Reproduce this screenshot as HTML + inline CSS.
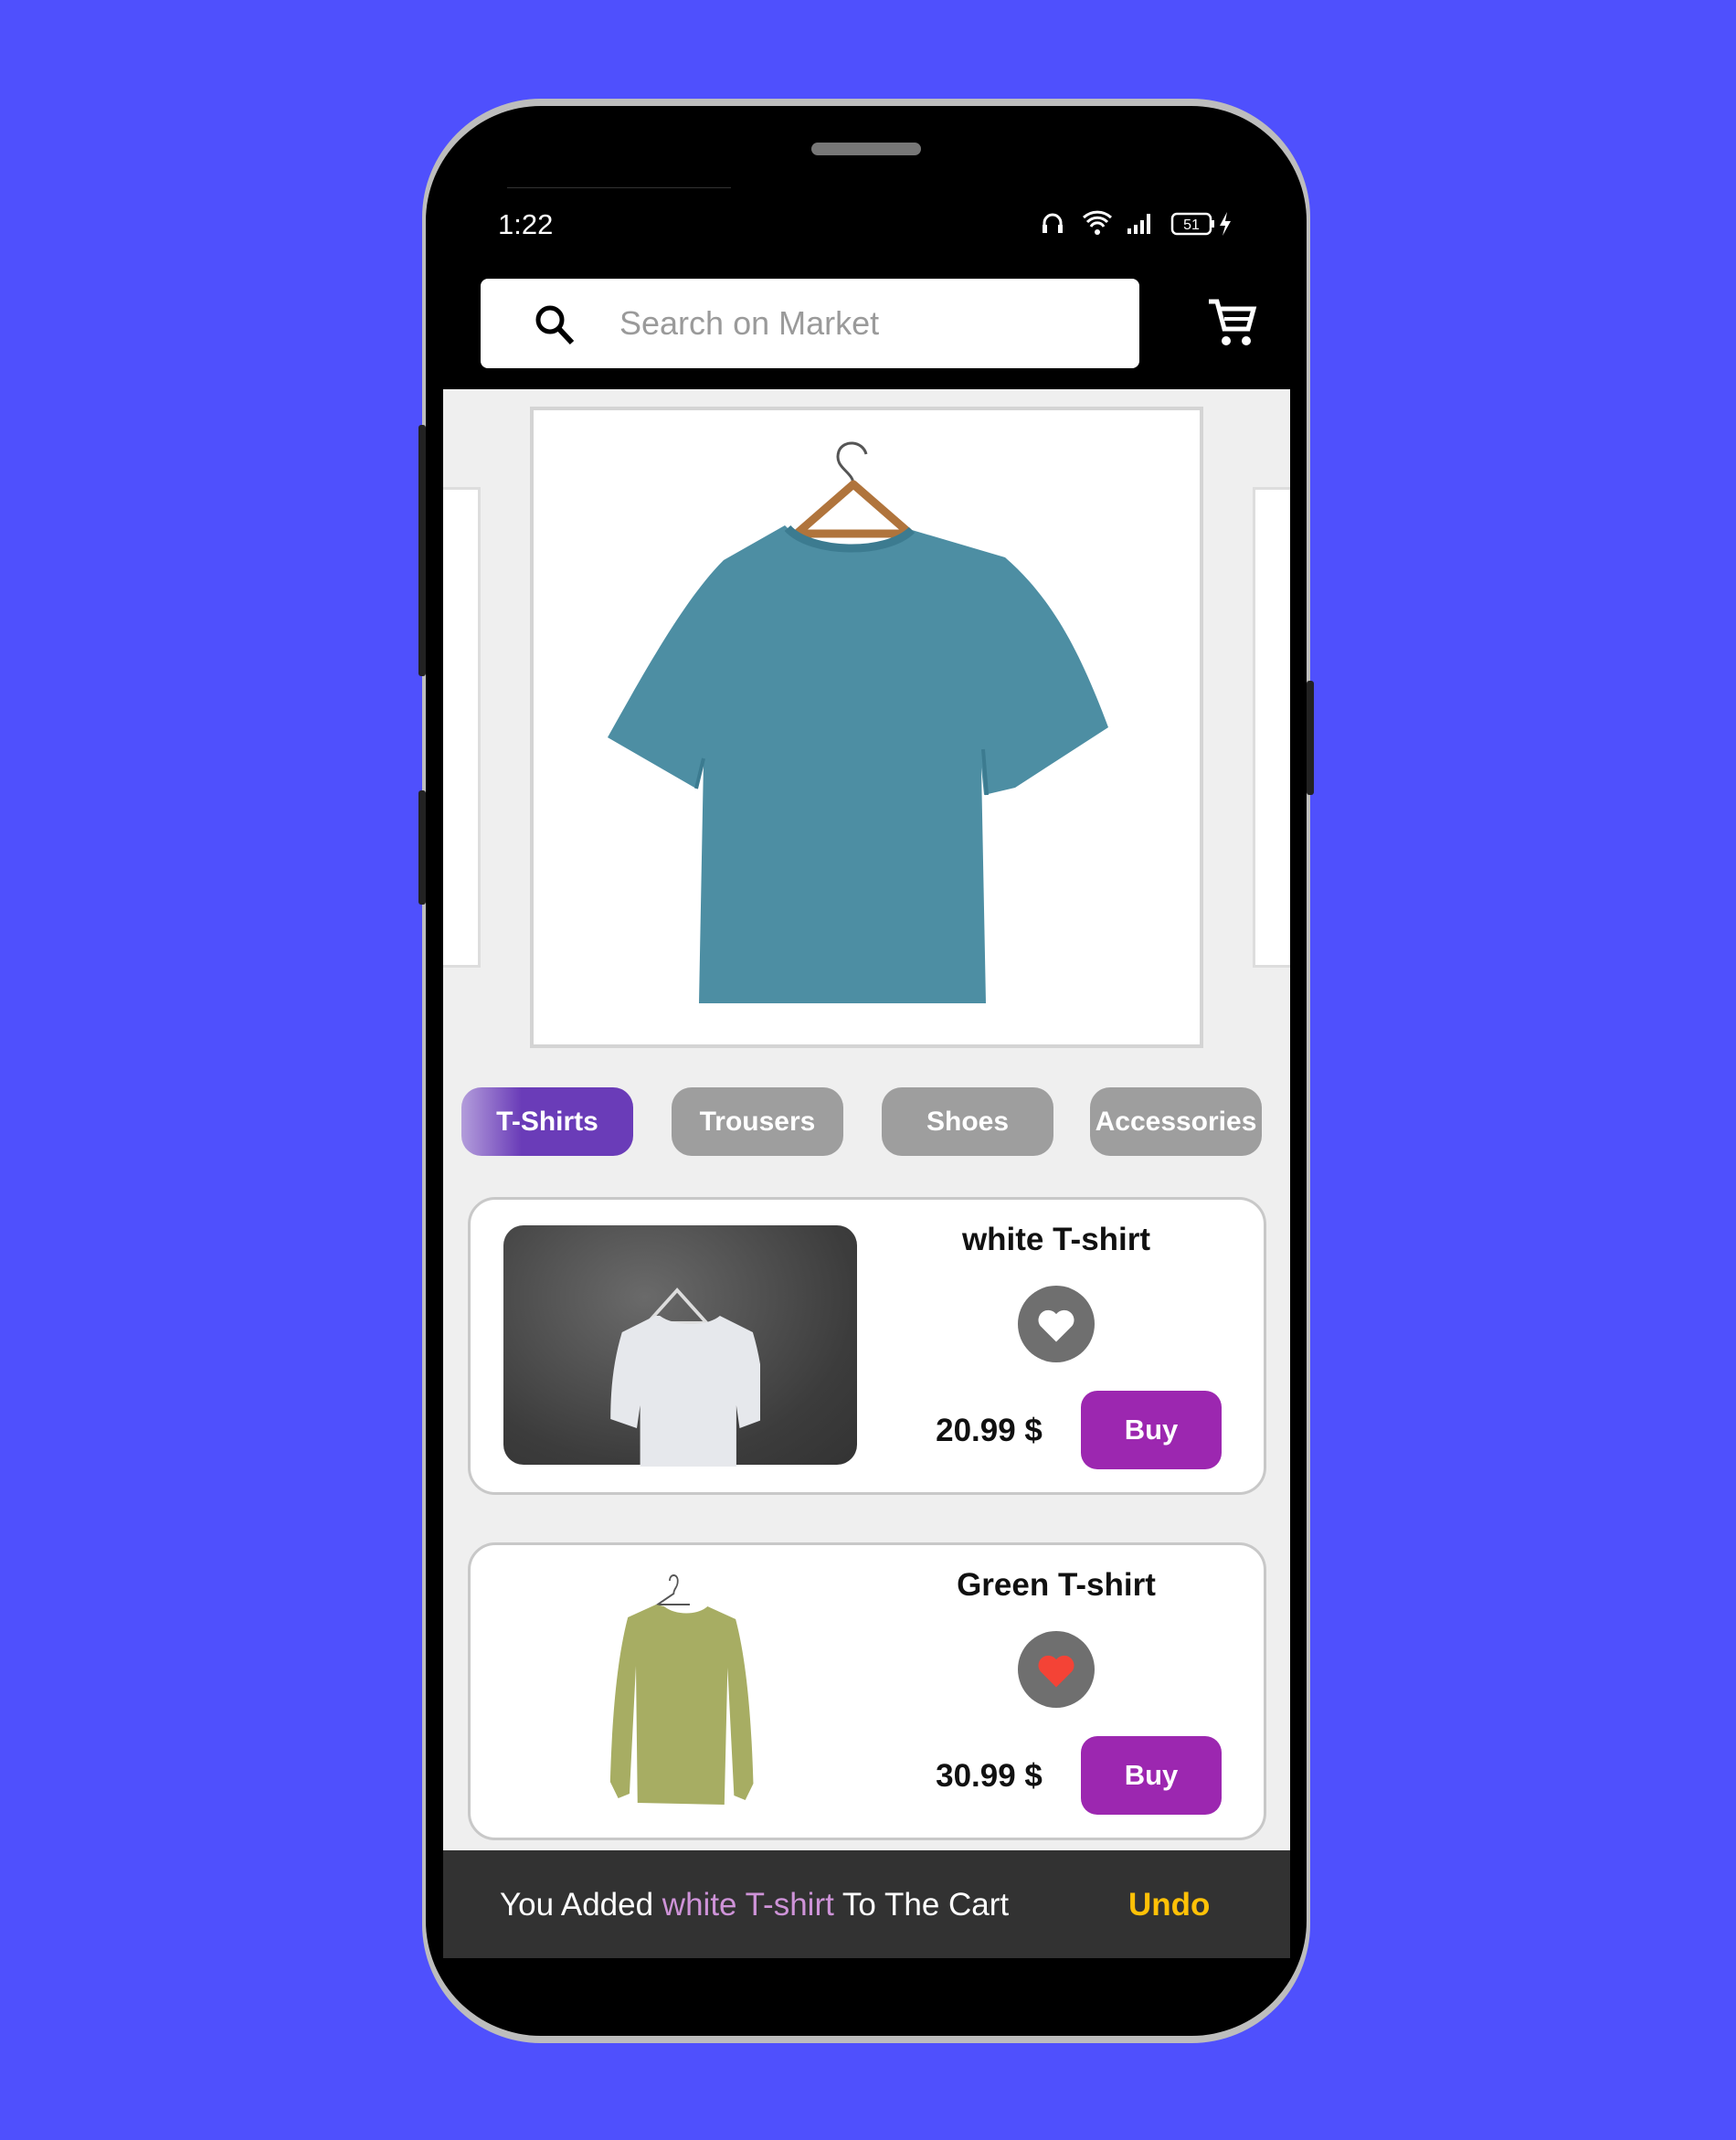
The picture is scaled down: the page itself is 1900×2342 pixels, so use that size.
<!DOCTYPE html>
<html><head><meta charset="utf-8"><style>
*{margin:0;padding:0;box-sizing:border-box}
body{width:1900px;height:2342px;background:#4f50fd;position:relative;overflow:hidden;font-family:"Liberation Sans",sans-serif}
.a{position:absolute}
.chip{position:absolute;top:1190px;height:75px;width:188px;border-radius:22px;background:#9e9e9e;color:#fff;font-weight:bold;font-size:30px;display:flex;align-items:center;justify-content:center}
.card{position:absolute;left:512px;width:874px;background:#fff;border:3px solid #c8c8c8;border-radius:30px}
.t{position:absolute;font-weight:bold;font-size:35px;color:#111;text-align:center}
.buy{position:absolute;left:1183px;width:154px;height:86px;background:#9c27b0;border-radius:18px;color:#fff;font-weight:bold;font-size:31px;display:flex;align-items:center;justify-content:center}
.heart{position:absolute;left:1114px;width:84px;height:84px;border-radius:50%;background:#6f6f6f}
</style></head><body>
<!-- phone -->
<div class="a" style="left:462px;top:108px;width:972px;height:2128px;border-radius:130px;background:#bdbdbd"></div>
<div class="a" style="left:466px;top:116px;width:964px;height:2112px;border-radius:126px;background:#000"></div>
<div class="a" style="left:458px;top:465px;width:8px;height:275px;background:#222;border-radius:3px"></div>
<div class="a" style="left:458px;top:865px;width:8px;height:125px;background:#222;border-radius:3px"></div>
<div class="a" style="left:1430px;top:745px;width:8px;height:125px;background:#222;border-radius:3px"></div>
<div class="a" style="left:888px;top:156px;width:120px;height:14px;border-radius:7px;background:#777"></div>
<div class="a" style="left:555px;top:205px;width:245px;height:1px;background:#333"></div>
<!-- status -->
<div class="a" style="left:545px;top:228px;color:#fff;font-size:31px">1:22</div>
<svg class="a" style="left:1140px;top:228px" width="215" height="32" viewBox="0 0 215 32">
<path d="M3 26V16a9 9 0 0 1 18 0v10" stroke="#fff" stroke-width="3" fill="none"/><rect x="1" y="18" width="5" height="9" fill="#fff"/><rect x="18" y="18" width="5" height="9" fill="#fff"/>
<path d="M46 10a22 22 0 0 1 30 0M50 15a15 15 0 0 1 22 0M54 20a8 8 0 0 1 14 0" stroke="#fff" stroke-width="3" fill="none"/><circle cx="61" cy="26" r="3" fill="#fff"/>
<rect x="94" y="22" width="4" height="6" fill="#fff"/><rect x="101" y="18" width="4" height="10" fill="#fff"/><rect x="108" y="13" width="4" height="15" fill="#fff"/><rect x="115" y="6" width="4" height="22" fill="#fff"/>
<rect x="143" y="6" width="42" height="22" rx="5" stroke="#fff" stroke-width="2.5" fill="none"/><rect x="186" y="13" width="3" height="8" fill="#fff"/>
<text x="164" y="23" fill="#fff" font-size="16" text-anchor="middle" font-family="Liberation Sans">51</text>
<path d="M203 4l-8 15h6l-3 11 9-16h-6z" fill="#fff"/></svg>
<!-- search -->
<div class="a" style="left:526px;top:305px;width:721px;height:98px;background:#fff;border-radius:8px"></div>
<svg class="a" style="left:580px;top:328px" width="56" height="56" viewBox="0 0 56 56"><circle cx="22" cy="22" r="13" stroke="#000" stroke-width="5" fill="none"/><path d="M31 31l15 16" stroke="#000" stroke-width="6"/></svg>
<div class="a" style="left:678px;top:333px;color:#9a9a9a;font-size:36px">Search on Market</div>
<svg class="a" style="left:1320px;top:325px" width="56" height="56" viewBox="0 0 56 56"><path d="M3 5h9l8 30h26l6-22H16" stroke="#fff" stroke-width="5" fill="none"/><path d="M20 24h28" stroke="#fff" stroke-width="4"/><circle cx="22" cy="48" r="5" fill="#fff"/><circle cx="44" cy="48" r="5" fill="#fff"/></svg>
<!-- screen -->
<div class="a" style="left:485px;top:426px;width:927px;height:1600px;background:#efefef"></div>
<div class="a" style="left:485px;top:533px;width:41px;height:526px;background:#fff;border:3px solid #ddd;border-left:none"></div>
<div class="a" style="left:1371px;top:533px;width:41px;height:526px;background:#fff;border:3px solid #ddd;border-right:none"></div>
<div class="a" style="left:580px;top:445px;width:737px;height:702px;background:#fff;border:4px solid #d4d4d4"></div>
<svg class="a" style="left:0;top:0" width="1900" height="1200" viewBox="0 0 1900 1200">
<path d="M934 530c0-14-22-18-16-36 5-13 26-12 30 3" stroke="#555" stroke-width="3" fill="none"/>
<path d="M934 530l-62 54h124z" stroke="#b0743c" stroke-width="9" fill="none" stroke-linejoin="round"/>
<path d="M859 575l-67 38c-40 40-80 110-127 194l97 56 8-30-5 265 314 0-5-258 3 30 34-8 102-66c-30-80-60-140-113-186l-102-30c-30 30-110 25-139-5z" fill="#4d8ea3"/>
<path d="M862 578c25 28 108 30 136 2" stroke="#3c7b90" stroke-width="9" fill="none"/>
<path d="M770 830l-8 33M1080 870l-4-50" stroke="#3c7b90" stroke-width="4" fill="none"/></svg>
<!-- chips -->
<div class="chip" style="left:505px;background:linear-gradient(90deg,#b39ddb,#6a3cb8 35%,#6a3cb8)">T-Shirts</div>
<div class="chip" style="left:735px">Trousers</div>
<div class="chip" style="left:965px">Shoes</div>
<div class="chip" style="left:1193px">Accessories</div>
<!-- card 1 -->
<div class="card" style="top:1310px;height:326px"></div>
<div class="a" style="left:551px;top:1341px;width:387px;height:262px;border-radius:22px;background:radial-gradient(ellipse at 40% 30%,#6a6a6a,#3c3c3c 70%,#333)"></div>
<svg class="a" style="left:652px;top:1400px" width="180" height="205" viewBox="0 0 200 205" preserveAspectRatio="none"><path d="M99 12l-36 36h72z" stroke="#ddd" stroke-width="4" fill="none"/><path d="M72 40l-40 18c-10 30-14 60-14 95l32 10 4-25v115h117v-115l4 25 30-10c0-35-4-65-14-95l-40-18c-15 12-55 12-73 0z" fill="#e6e8ec"/></svg>
<div class="t" style="left:1030px;top:1337px;width:252px">white T-shirt</div>
<div class="heart" style="top:1407px"></div>
<svg class="a" style="left:1130px;top:1423px" width="52" height="52" viewBox="0 0 24 24"><path d="M12 21l-8-8a5 5 0 0 1 8-6 5 5 0 0 1 8 6z" fill="#fff"/></svg>
<div class="t" style="left:1015px;top:1546px;width:135px">20.99 $</div>
<div class="buy" style="top:1522px">Buy</div>
<!-- card 2 -->
<div class="card" style="top:1688px;height:326px"></div>
<svg class="a" style="left:652px;top:1720px" width="176" height="260" viewBox="0 0 200 260" preserveAspectRatio="none"><path d="M92 10c0-8 10-8 10 0s-5 8-5 14l-20 12h40" stroke="#555" stroke-width="2" fill="none"/><path d="M75 36l-35 14c-15 50-20 120-22 180l10 18 14-5 8-140 2 150 108 2 4-150 8 140 14 5 10-18c-2-60-7-130-22-180l-35-14c-12 10-40 10-54 0z" fill="#a7ad63"/></svg>
<div class="t" style="left:1030px;top:1715px;width:252px">Green T-shirt</div>
<div class="heart" style="top:1785px"></div>
<svg class="a" style="left:1130px;top:1801px" width="52" height="52" viewBox="0 0 24 24"><path d="M12 21l-8-8a5 5 0 0 1 8-6 5 5 0 0 1 8 6z" fill="#f44336"/></svg>
<div class="t" style="left:1015px;top:1924px;width:135px">30.99 $</div>
<div class="buy" style="top:1900px">Buy</div>
<!-- snackbar -->
<div class="a" style="left:485px;top:2025px;width:927px;height:118px;background:#323232"></div>
<div class="a" style="left:547px;top:2065px;color:#fff;font-size:35px">You Added <span style="color:#ce93d8">white T-shirt</span> To The Cart</div>
<div class="a" style="left:1235px;top:2065px;color:#ffc107;font-size:35px;font-weight:bold">Undo</div>
</body></html>
